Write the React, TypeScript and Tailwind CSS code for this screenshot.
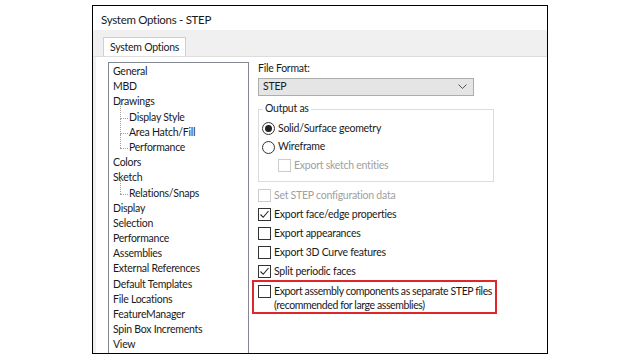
import React from 'react';

const FONT = { fontFamily: 'Lato, "Noto Sans", sans-serif' };

type TreeItem = { label: string; child?: boolean; last?: boolean };

const items: TreeItem[] = [
  { label: 'General' },
  { label: 'MBD' },
  { label: 'Drawings' },
  { label: 'Display Style', child: true },
  { label: 'Area Hatch/Fill', child: true },
  { label: 'Performance', child: true, last: true },
  { label: 'Colors' },
  { label: 'Sketch' },
  { label: 'Relations/Snaps', child: true, last: true },
  { label: 'Display' },
  { label: 'Selection' },
  { label: 'Performance' },
  { label: 'Assemblies' },
  { label: 'External References' },
  { label: 'Default Templates' },
  { label: 'File Locations' },
  { label: 'FeatureManager' },
  { label: 'Spin Box Increments' },
  { label: 'View' },
];

const TreeRow = ({ item }: { item: TreeItem }) => (
  <div className="relative h-[15.2px] leading-[15.2px] whitespace-nowrap">
    {item.child ? (
      <>
        <span
          className={`absolute left-[7px] top-[-6px] w-0 border-l border-dotted border-[#a0a0a0] ${
            item.last ? 'h-[14px]' : 'h-[15.2px]'
          }`}
        />
        <span className="absolute left-[7px] top-[8px] w-[8px] border-t border-dotted border-[#a0a0a0]" />
        <span className="pl-[16px]">{item.label}</span>
      </>
    ) : (
      <span>{item.label}</span>
    )}
  </div>
);

const Check = ({
  checked,
  disabled,
  children,
}: {
  checked?: boolean;
  disabled?: boolean;
  children: React.ReactNode;
}) => (
  <div className={`flex items-start gap-[3px] ${disabled ? 'text-[#a0a0a0]' : 'text-[#1a1a1a]'}`}>
    <span
      className={`mt-[1px] w-[13px] h-[13px] shrink-0 border bg-white flex items-center justify-center ${
        disabled ? 'border-[#cccccc]' : 'border-[#333333]'
      }`}
    >
      {checked && (
        <svg width="11" height="11" viewBox="0 0 11 11">
          <path d="M1.5 5.5 L4.2 8.3 L9.5 2" fill="none" stroke="#222" strokeWidth="1.1" />
        </svg>
      )}
    </span>
    <span className="leading-[14px] whitespace-nowrap">{children}</span>
  </div>
);

const Radio = ({ selected, children }: { selected?: boolean; children: React.ReactNode }) => (
  <div className="flex items-center gap-[3px] text-[#1a1a1a]">
    <span className="w-[13px] h-[13px] rounded-full border border-[#333333] bg-white flex items-center justify-center">
      {selected && <span className="w-[7px] h-[7px] rounded-full bg-[#222222]" />}
    </span>
    <span>{children}</span>
  </div>
);

export default function App() {
  return (
    <div
      className="w-[640px] h-[360px] bg-white overflow-hidden text-[10.5px] tracking-[-0.25px] text-[#1a1a1a]"
      style={FONT}
    >
      <div className="ml-[92px] mt-[5px] w-[456px] h-[349px] border border-black flex flex-col overflow-hidden">
        <div className="h-[24px] shrink-0 pl-[8px] pt-[5px] text-[11.5px] tracking-[-0.3px] bg-white">
          System Options - STEP
        </div>

        <div className="h-[27px] shrink-0 bg-[#f0f0f0] border-b border-[#dcdcdc] flex items-end pl-[10px]">
          <div className="h-[19px] bg-white border border-b-0 border-[#d0d0d0] px-[6px] leading-[18px] whitespace-nowrap">
            System Options
          </div>
        </div>

        <div className="flex flex-1 min-h-0 border-l-[3px] border-[#f0f0f0]">
          <div className="ml-[12px] mt-[5px] w-[141px] shrink-0 border border-[#828790] border-b-0 pl-[4px] pt-[1px] bg-white">
            {items.map((it, i) => (
              <TreeRow key={i} item={it} />
            ))}
          </div>

          <div className="ml-[9px] mt-[4px] w-[250px] flex flex-col">
            <div className="leading-[15px]">File Format:</div>
            <div className="mt-[2px] w-[216px] h-[18px] bg-[#e5e5e5] border border-[#adadad] flex items-center justify-between pl-[4px] pr-[6px]">
              <span>STEP</span>
              <svg width="9" height="6" viewBox="0 0 9 6">
                <path d="M0.5 0.5 L4.5 4.5 L8.5 0.5" fill="none" stroke="#555" strokeWidth="1" />
              </svg>
            </div>

            <div className="relative mt-[13px] w-[236px] h-[73px] border border-[#dcdcdc]">
              <span className="absolute left-[4px] top-[-9px] bg-white px-[2px] leading-[15px]">Output as</span>
              <div className="pl-[3px] pt-[11px] flex flex-col gap-[2.5px]">
                <Radio selected>Solid/Surface geometry</Radio>
                <Radio>Wireframe</Radio>
                <div className="pl-[16px]">
                  <Check disabled>Export sketch entities</Check>
                </div>
              </div>
            </div>

            <div className="mt-[6px] flex flex-col gap-[5px]">
              <Check disabled>Set STEP configuration data</Check>
              <Check checked>Export face/edge properties</Check>
              <Check>Export appearances</Check>
              <Check>Export 3D Curve features</Check>
              <Check checked>Split periodic faces</Check>
            </div>

            <div className="mt-[2px] ml-[-6px] w-[245px] h-[34px] border-2 border-[#e0262a] pl-[4px] pt-[2px] tracking-[-0.4px]">
              <Check>
                Export assembly components as separate STEP files
                <br />
                (recommended for large assemblies)
              </Check>
            </div>
          </div>
        </div>
      </div>
    </div>
  );
}
